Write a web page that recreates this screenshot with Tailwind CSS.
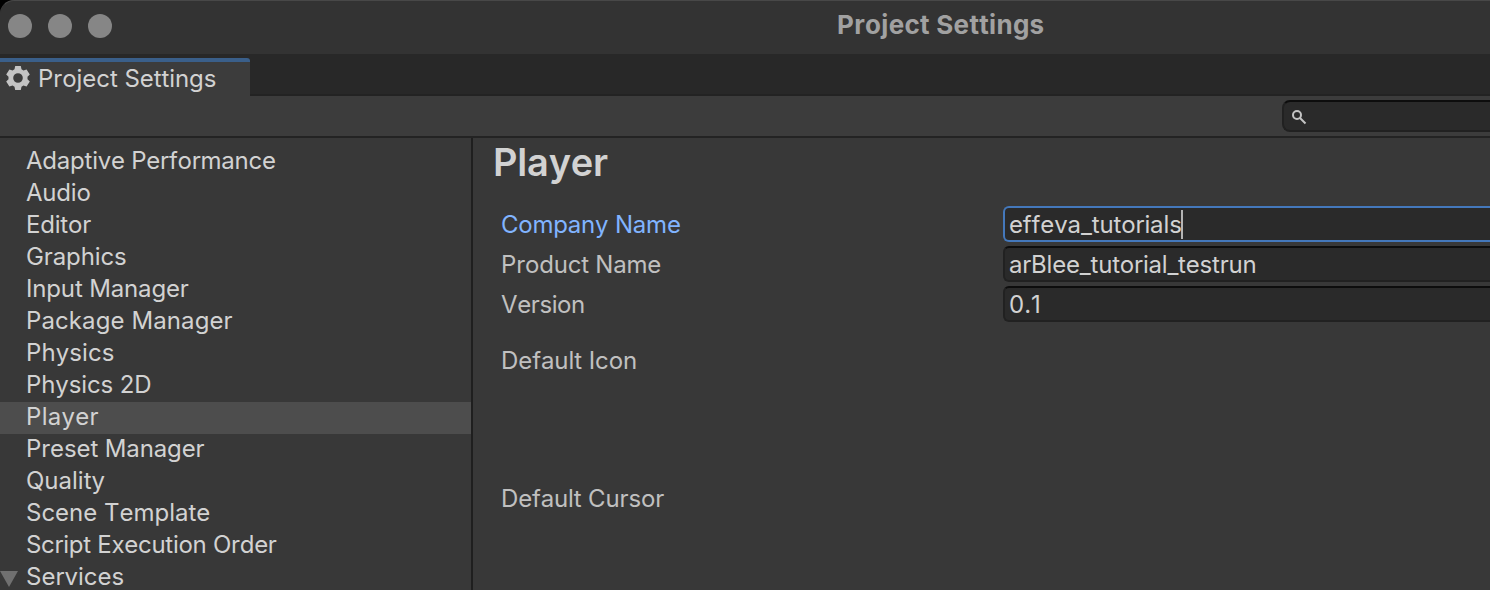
<!DOCTYPE html>
<html lang="en">
<head>
<meta charset="utf-8">
<title>Project Settings</title>
<script src="https://cdn.jsdelivr.net/npm/@tailwindcss/browser@4"></script>
</head>
<body class="bg-black">
<div class="flex h-[590px] w-[1490px] flex-col overflow-hidden rounded-tl-[14px] bg-[#383838] font-['Inter',sans-serif] text-2xl leading-8 text-[#d2d2d2] [font-kerning:none]">
  <header class="flex h-[54px] shrink-0 items-start rounded-tl-[14px] border-t border-l border-t-[#484848] border-l-[#333333] bg-[#333333]">
    <div class="flex w-[836px] gap-4 pt-[13px] pl-[7px]">
      <span class="size-6 rounded-full bg-[#868686]"></span>
      <span class="size-6 rounded-full bg-[#868686]"></span>
      <span class="size-6 rounded-full bg-[#868686]"></span>
    </div>
    <h1 class="pt-2 text-[26px] font-bold tracking-[0.3px] whitespace-nowrap text-[#a1a1a1]">Project Settings</h1>
  </header>
  <nav class="flex h-[42px] shrink-0 border-b-2 border-[#232323] bg-[#282828] pt-1">
    <div class="-mb-0.5 flex h-[38px] w-[250px] shrink-0 items-center gap-2 rounded-tr-[3px] border-t-4 border-[#3a5f8a] bg-[#3c3c3c] pl-1.5">
      <svg class="-mt-0.5 size-6 shrink-0" viewBox="0 0 24 24" fill="#c4c4c4" fill-rule="evenodd"><path d="M9.200 0h5.600l.7 3.300 1.900 1.100 3.200-1L23.800 8.500l-2.300 2.300v2.400l2.300 2.300-3.200 5.100-3.200-1-1.900 1.100-.7 3.300H9.200l-.7-3.300-1.900-1.100-3.200 1L.2 15.500l2.300-2.300v-2.400L.2 8.500l3.200-5.100 3.200 1 1.900-1.100ZM12 7.200a4.800 4.800 0 1 0 0 9.600a4.800 4.800 0 0 0 0-9.600Z"/></svg>
      <span class="tracking-[-0.06px] whitespace-nowrap">Project Settings</span>
    </div>
  </nav>
  <div class="flex h-[42px] shrink-0 justify-end border-b-2 border-[#232323] bg-[#3c3c3c] pt-1">
    <div class="flex h-8 w-[208px] items-center rounded-l-lg border-2 border-r-0 border-[#212121] border-t-[#0d0d0d] bg-[#2a2a2a] pl-2">
      <svg class="mt-0.5 size-4" viewBox="0 0 16 16" fill="none" stroke="#c4c4c4" stroke-width="2"><circle cx="5" cy="6" r="4"/><path d="M8 9l5.500 5.500"/></svg>
    </div>
  </div>
  <main class="flex min-h-0 flex-1">
    <ul class="w-[473px] shrink-0 border-r-2 border-[#1f1f1f] pt-2 leading-[30px] whitespace-nowrap">
      <li class="h-8 pl-[26px] tracking-[-0.23px]">Adaptive Performance</li>
      <li class="h-8 pl-[26px] tracking-[-0.2px]">Audio</li>
      <li class="h-8 pl-[26px] tracking-[-0.2px]">Editor</li>
      <li class="h-8 pl-[26px] tracking-[-0.12px]">Graphics</li>
      <li class="h-8 pl-[26px] tracking-[-0.15px]">Input Manager</li>
      <li class="h-8 pl-[26px] tracking-[0.1px]">Package Manager</li>
      <li class="h-8 pl-[26px] tracking-[0.1px]">Physics</li>
      <li class="h-8 pl-[26px] tracking-[-0.1px]">Physics 2D</li>
      <li class="h-8 bg-[#4d4d4d] pl-[26px] tracking-[0.3px]">Player</li>
      <li class="h-8 pl-[26px] tracking-[-0.12px]">Preset Manager</li>
      <li class="h-8 pl-[26px]">Quality</li>
      <li class="h-8 pl-[26px]">Scene Template</li>
      <li class="h-8 pl-[26px] tracking-[-0.28px]">Script Execution Order</li>
      <li class="flex h-[30px] items-start"><svg class="mt-[9px] mr-2 h-4 w-[18px]" viewBox="0 0 18 16" fill="#707070"><path d="M0 0h18L9 16Z"/></svg>Services</li>
    </ul>
    <section class="flex-1 pl-7 text-[#c0c0c0]">
      <h2 class="-ml-2 h-[68px] pt-0.5 text-[38px] leading-[44px] font-semibold tracking-[-0.2px] text-[#d2d2d2]">Player</h2>
      <div class="flex h-10">
        <label class="w-[502px] pt-[3px] tracking-[-0.2px] text-[#81b4ff]">Company Name</label>
        <div class="flex h-9 flex-1 items-center rounded-l-md border-2 border-r-0 border-[#4478bb] bg-[#2a2a2a] pl-1 text-[#d2d2d2]"><span class="pt-px tracking-[-0.13px]">effeva_tutorials</span><span class="-ml-px h-[29px] w-0.5 bg-[#b4b4b4]"></span></div>
      </div>
      <div class="flex h-10">
        <label class="w-[502px] pt-[3px] tracking-[-0.2px]">Product Name</label>
        <div class="flex h-9 flex-1 items-center rounded-l-md border-2 border-r-0 border-[#212121] border-t-[#0d0d0d] bg-[#2a2a2a] pt-px pl-1 tracking-[-0.2px] text-[#d2d2d2]">arBlee_tutorial_testrun</div>
      </div>
      <div class="flex h-14">
        <label class="w-[502px] pt-[3px] tracking-[-0.4px]">Version</label>
        <div class="flex h-9 flex-1 items-center rounded-l-md border-2 border-r-0 border-[#212121] border-t-[#0d0d0d] bg-[#2a2a2a] pt-px pl-1 text-[#d2d2d2]">0.1</div>
      </div>
      <div class="h-[138px] pt-[3px] tracking-[-0.08px]">Default Icon</div>
      <div class="pt-[3px] tracking-[-0.15px]">Default Cursor</div>
    </section>
  </main>
</div>
</body>
</html>
